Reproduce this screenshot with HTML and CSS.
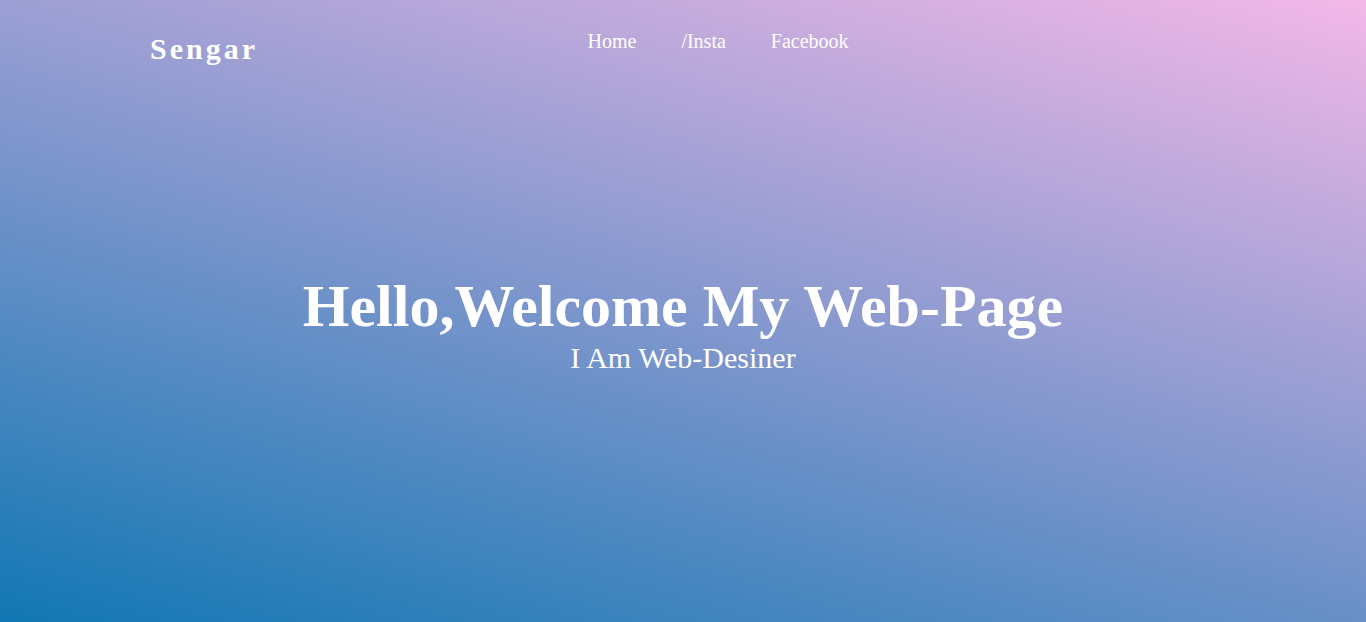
FILE: index.html
```html
<!DOCTYPE html>
<html lang="en">
<head>
<meta charset="utf-8">
<title>Sengar</title>
<link rel="stylesheet" href="styles.css">
</head>
<body>
<div class="page">
  <header class="header">
    <div class="logo">Sengar</div>
    <nav class="nav">
      <a href="#" class="nav-link">Home</a>
      <a href="#" class="nav-link">/Insta</a>
      <a href="#" class="nav-link">Facebook</a>
    </nav>
  </header>
  <main class="hero">
    <h1 class="hero-title">Hello,Welcome My Web-Page</h1>
    <p class="hero-sub">I Am Web-Desiner</p>
  </main>
</div>
</body>
</html>
```
FILE: styles.css
```css
html, body {
  margin: 0;
  padding: 0;
  height: 100%;
}
body {
  font-family: "Liberation Serif", "Times New Roman", serif;
  color: #ffffff;
  background: linear-gradient(16deg, #1177b3 0%, #f3b8e8 100%);
  overflow: hidden;
}
.page {
  height: 100vh;
  display: flex;
  flex-direction: column;
}
.header {
  display: flex;
  align-items: flex-start;
  padding: 30px 0 0 150px;
}
.logo {
  margin-top: 2px;
  font-size: 30px;
  font-weight: bold;
  letter-spacing: 3px;
}
.nav {
  display: flex;
  margin-left: 307px;
}
.nav-link {
  color: #ffffff;
  text-decoration: none;
  font-size: 20px;
  padding: 0 22.5px;
}
.hero {
  flex: 1;
  display: flex;
  flex-direction: column;
  justify-content: center;
  align-items: center;
  padding-bottom: 41px;
}
.hero-title {
  margin: 0;
  font-size: 60px;
  font-weight: bold;
}
.hero-sub {
  margin: 0;
  font-size: 30px;
}
```
